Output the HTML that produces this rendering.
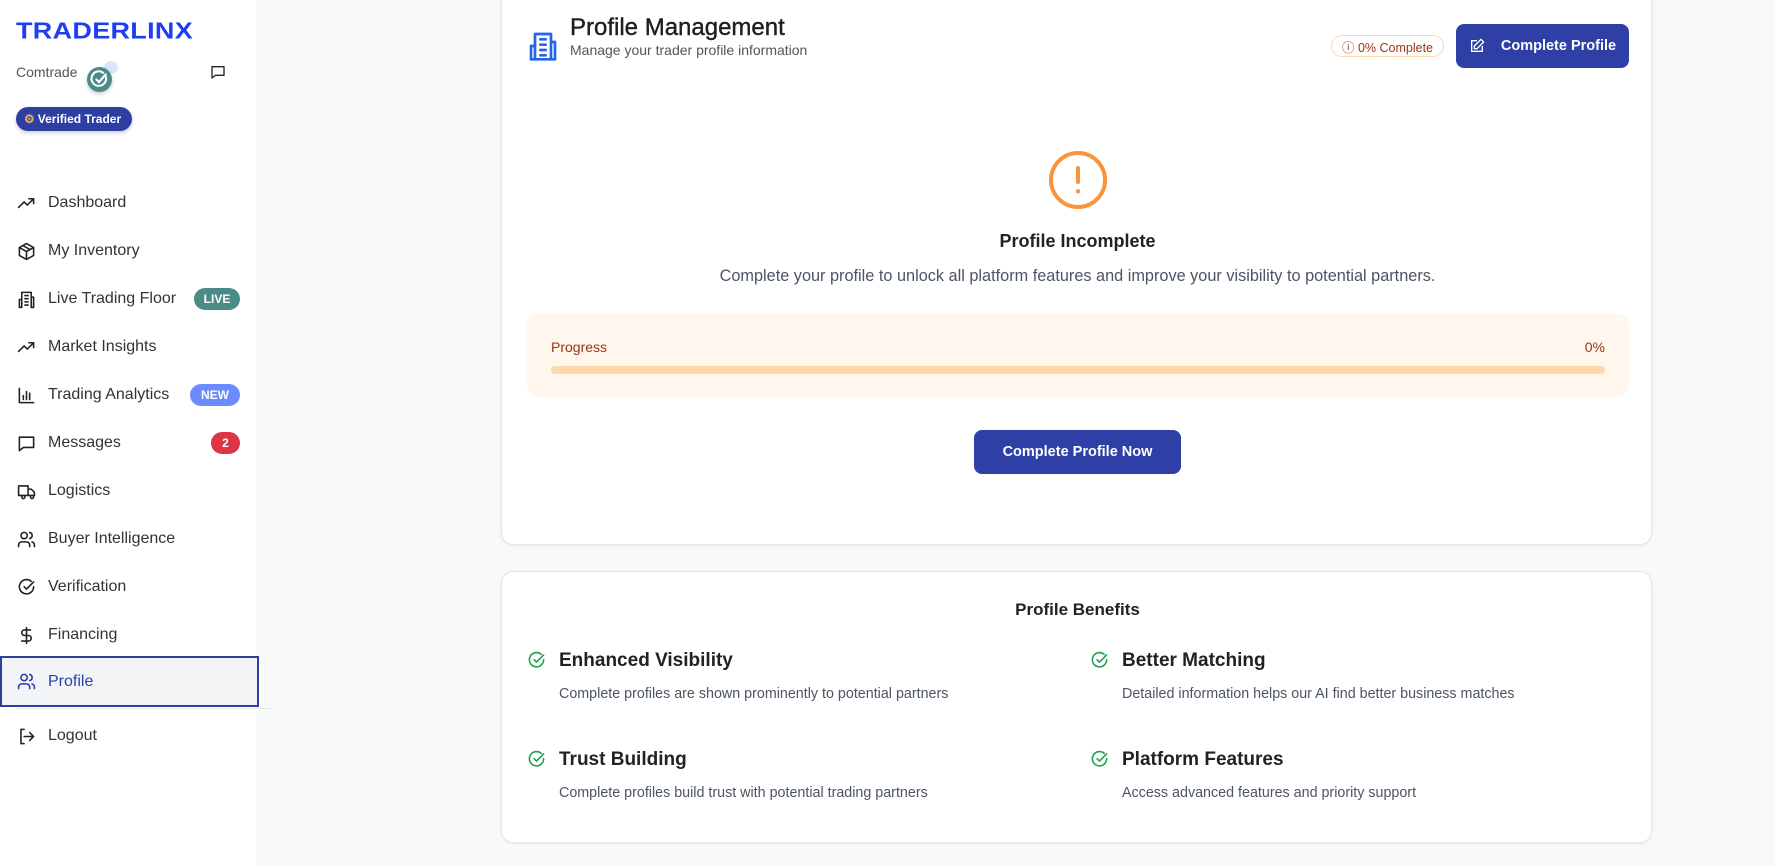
<!DOCTYPE html>
<html><head><meta charset="utf-8"><style>
*{box-sizing:border-box;margin:0;padding:0}
body{width:1775px;height:866px;overflow:hidden;background:#f8f9fb;font-family:"Liberation Sans",sans-serif;color:#222;position:relative}
.sb{position:absolute;left:0;top:0;width:256px;height:866px;background:#fff}
.abs{position:absolute}
.nav{position:absolute;left:0;width:259px;height:48px;display:flex;align-items:center;font-size:16px;color:#333}
.nav svg{position:absolute;left:17px;width:19px;height:19px;fill:none;stroke:#222;stroke-width:2;stroke-linecap:round;stroke-linejoin:round}
.nav span.t{position:absolute;left:48px}
.bdg{position:absolute;height:22px;border-radius:11px;color:#fff;font-size:12px;font-weight:bold;display:flex;align-items:center;justify-content:center}
.card{position:absolute;left:501px;width:1151px;background:#fff;border:1px solid #e3e5e8;border-radius:12px;box-shadow:0 1px 3px rgba(0,0,0,.06)}
.btn{position:absolute;background:#2e40a6;color:#fff;font-weight:bold;border-radius:8px;display:flex;align-items:center;justify-content:center}
.chk{position:absolute;width:19px;height:19px;fill:none;stroke:#22a050;stroke-width:2;stroke-linecap:round;stroke-linejoin:round}
.bt{position:absolute;font-size:19px;font-weight:600;color:#222}
.bd{position:absolute;font-size:14.3px;color:#4b5563}
</style></head><body>
<div class="sb">
<div class="abs" style="left:16px;top:18px;font-size:27px;font-weight:900;color:#1e3ff0;letter-spacing:0.3px;transform:scaleY(.85);transform-origin:top left">TRADERLINX</div>
<div class="abs" style="left:16px;top:64px;font-size:14px;color:#555">Comtrade</div>
<div class="abs" style="left:104px;top:61px;width:14px;height:13px;border-radius:50%;background:#dbe3ff"></div>
<div class="abs" style="left:87px;top:67px;width:25px;height:25px;border-radius:50%;background:#4a8a87;box-shadow:0 2px 4px rgba(0,0,0,.2)"><svg width="25" height="25" viewBox="0 0 24 24" fill="none" stroke="#fff" stroke-width="2" stroke-linecap="round"><path d="M18 9a7 7 0 1 1-2.5-3.5"/><path d="M9 12l2.5 2.5L18 7"/></svg></div>
<svg class="abs" style="left:210px;top:64px" width="16" height="16" viewBox="0 0 24 24" fill="none" stroke="#222" stroke-width="2" stroke-linejoin="round"><path d="M3 4h18v13H8l-5 4z"/></svg>
<div class="abs" style="left:16px;top:107px;width:116px;height:24px;border-radius:12px;background:#2e3fa3;color:#fff;font-size:12px;font-weight:bold;display:flex;align-items:center;padding-left:8px;box-shadow:0 2px 4px rgba(0,0,0,.2)"><span style="color:#f0b040;margin-right:3px">⚙</span>Verified Trader</div>

<div class="nav" style="top:179px"><svg viewBox="0 0 24 24"><path d="M2 17l7-7 4 4 8-8M15 6h6v6"/></svg><span class="t">Dashboard</span></div>
<div class="nav" style="top:227px"><svg viewBox="0 0 24 24"><path d="M12 2l9 5v10l-9 5-9-5V7z M3 7l9 5 9-5 M12 12v10 M7.5 4.5l9 5"/></svg><span class="t">My Inventory</span></div>
<div class="nav" style="top:275px"><svg viewBox="0 0 24 24"><path d="M6 22V3h12v19 M6 12H3v10h3 M18 9h3v13h-3 M10 7h4M10 11h4M10 15h4M10 19h4"/></svg><span class="t">Live Trading Floor</span><div class="bdg" style="left:194px;top:13px;width:46px;background:#4a8a87">LIVE</div></div>
<div class="nav" style="top:323px"><svg viewBox="0 0 24 24"><path d="M2 17l7-7 4 4 8-8M15 6h6v6"/></svg><span class="t">Market Insights</span></div>
<div class="nav" style="top:371px"><svg viewBox="0 0 24 24"><path d="M3 3v18h18 M8 17v-5 M12 17V7 M16 17v-8"/></svg><span class="t">Trading Analytics</span><div class="bdg" style="left:190px;top:13px;width:50px;background:#6b8cff">NEW</div></div>
<div class="nav" style="top:419px"><svg viewBox="0 0 24 24"><path d="M3 4h18v13H8l-5 4z"/></svg><span class="t">Messages</span><div class="bdg" style="left:211px;top:13px;width:29px;background:#dc3545">2</div></div>
<div class="nav" style="top:467px"><svg viewBox="0 0 24 24"><path d="M2 5h12v12H2z M14 9h4l4 4v4h-8 M6 19a2 2 0 1 0 0-.1 M17 19a2 2 0 1 0 0-.1"/></svg><span class="t">Logistics</span></div>
<div class="nav" style="top:515px"><svg viewBox="0 0 24 24"><circle cx="9" cy="7" r="4"/><path d="M2 21v-2a4 4 0 0 1 4-4h6a4 4 0 0 1 4 4v2 M16 3.1a4 4 0 0 1 0 7.8 M22 21v-2a4 4 0 0 0-3-3.9"/></svg><span class="t">Buyer Intelligence</span></div>
<div class="nav" style="top:563px"><svg viewBox="0 0 24 24"><path d="M21 11a9 9 0 1 1-3-6.7 M9 11l3 3L21 5"/></svg><span class="t">Verification</span></div>
<div class="nav" style="top:611px"><svg viewBox="0 0 24 24"><path d="M12 2v20 M17 5H9.5a3.5 3.5 0 0 0 0 7h5a3.5 3.5 0 0 1 0 7H6"/></svg><span class="t">Financing</span></div>
<div class="nav" style="top:656px;height:51px;background:#f3f4f6;border:2px solid #2e3fa3;color:#2e3fa3"><svg viewBox="0 0 24 24" style="stroke:#2e3fa3;left:15px"><circle cx="9" cy="7" r="4"/><path d="M2 21v-2a4 4 0 0 1 4-4h6a4 4 0 0 1 4 4v2 M16 3.1a4 4 0 0 1 0 7.8 M22 21v-2a4 4 0 0 0-3-3.9"/></svg><span class="t" style="left:46px">Profile</span></div>
<div class="abs" style="left:16px;top:708px;width:256px;height:1px;background:#e5e7eb"></div>
<div class="nav" style="top:712px"><svg viewBox="0 0 24 24"><path d="M9 21H5V3h4 M16 17l5-5-5-5 M21 12H9"/></svg><span class="t">Logout</span></div>
</div>

<div class="card" style="top:-20px;height:565px">
<svg class="abs" style="left:25px;top:49px" width="32" height="32" viewBox="0 0 24 24" fill="none" stroke="#2563eb" stroke-width="2" stroke-linecap="round" stroke-linejoin="round"><path d="M6 22V3h12v19z M6 12H3v10h3 M18 9h3v13h-3 M10 7h4M10 11h4M10 15h4M10 19h4"/></svg>
<div class="abs" style="left:68px;top:33px;font-size:24px;color:#1f1f1f;-webkit-text-stroke:0.4px #1f1f1f">Profile Management</div>
<div class="abs" style="left:68px;top:61px;font-size:14px;color:#555">Manage your trader profile information</div>
<div class="abs" style="left:829px;top:54px;width:113px;height:22px;border:1px solid #fed7aa;border-radius:11px;color:#9a3412;font-size:12.5px;display:flex;align-items:center;justify-content:center">ⓘ&nbsp;0% Complete</div>
<div class="btn" style="left:954px;top:43px;width:173px;height:44px;font-size:14.5px"><svg width="16" height="16" viewBox="0 0 24 24" fill="none" stroke="#fff" stroke-width="2" stroke-linejoin="round" style="margin-right:16px"><path d="M12 4H4v16h16v-8 M18 2l4 4-10 10H8v-4z"/></svg>Complete Profile</div>
<svg class="abs" style="left:545px;top:168px" width="62" height="62" viewBox="0 0 62 62" fill="none" stroke="#fb923c" stroke-width="4" stroke-linecap="round"><circle cx="31" cy="31" r="27"/><path d="M31 19v14 M31 42v.5"/></svg>
<div class="abs" style="left:0;width:1151px;top:250px;text-align:center;font-size:18px;font-weight:600">Profile Incomplete</div>
<div class="abs" style="left:0;width:1151px;top:286px;text-align:center;font-size:16.3px;color:#4b5563">Complete your profile to unlock all platform features and improve your visibility to potential partners.</div>
<div class="abs" style="left:25px;top:333px;width:1102px;height:83px;background:#fff6ed;border-radius:12px">
<div class="abs" style="left:24px;top:25px;font-size:14px;color:#9a3412">Progress</div>
<div class="abs" style="right:24px;top:25px;font-size:14px;color:#9a3412">0%</div>
<div class="abs" style="left:24px;top:52px;width:1054px;height:8px;border-radius:4px;background:#fed7aa"></div>
</div>
<div class="btn" style="left:472px;top:449px;width:207px;height:44px;font-size:14.5px">Complete Profile Now</div>
</div>

<div class="card" style="top:571px;height:272px">
<div class="abs" style="left:0;width:1151px;top:28px;text-align:center;font-size:17px;font-weight:600">Profile Benefits</div>
<svg class="chk" style="left:25px;top:79px" viewBox="0 0 24 24"><path d="M21 11a9 9 0 1 1-3-6.7 M9 11l3 3L21 5"/></svg>
<div class="bt" style="left:57px;top:78px">Enhanced Visibility</div>
<div class="bd" style="left:57px;top:114px">Complete profiles are shown prominently to potential partners</div>
<svg class="chk" style="left:25px;top:178px" viewBox="0 0 24 24"><path d="M21 11a9 9 0 1 1-3-6.7 M9 11l3 3L21 5"/></svg>
<div class="bt" style="left:57px;top:177px">Trust Building</div>
<div class="bd" style="left:57px;top:213px">Complete profiles build trust with potential trading partners</div>
<svg class="chk" style="left:588px;top:79px" viewBox="0 0 24 24"><path d="M21 11a9 9 0 1 1-3-6.7 M9 11l3 3L21 5"/></svg>
<div class="bt" style="left:620px;top:78px">Better Matching</div>
<div class="bd" style="left:620px;top:114px">Detailed information helps our AI find better business matches</div>
<svg class="chk" style="left:588px;top:178px" viewBox="0 0 24 24"><path d="M21 11a9 9 0 1 1-3-6.7 M9 11l3 3L21 5"/></svg>
<div class="bt" style="left:620px;top:177px">Platform Features</div>
<div class="bd" style="left:620px;top:213px">Access advanced features and priority support</div>
</div>
</body></html>
